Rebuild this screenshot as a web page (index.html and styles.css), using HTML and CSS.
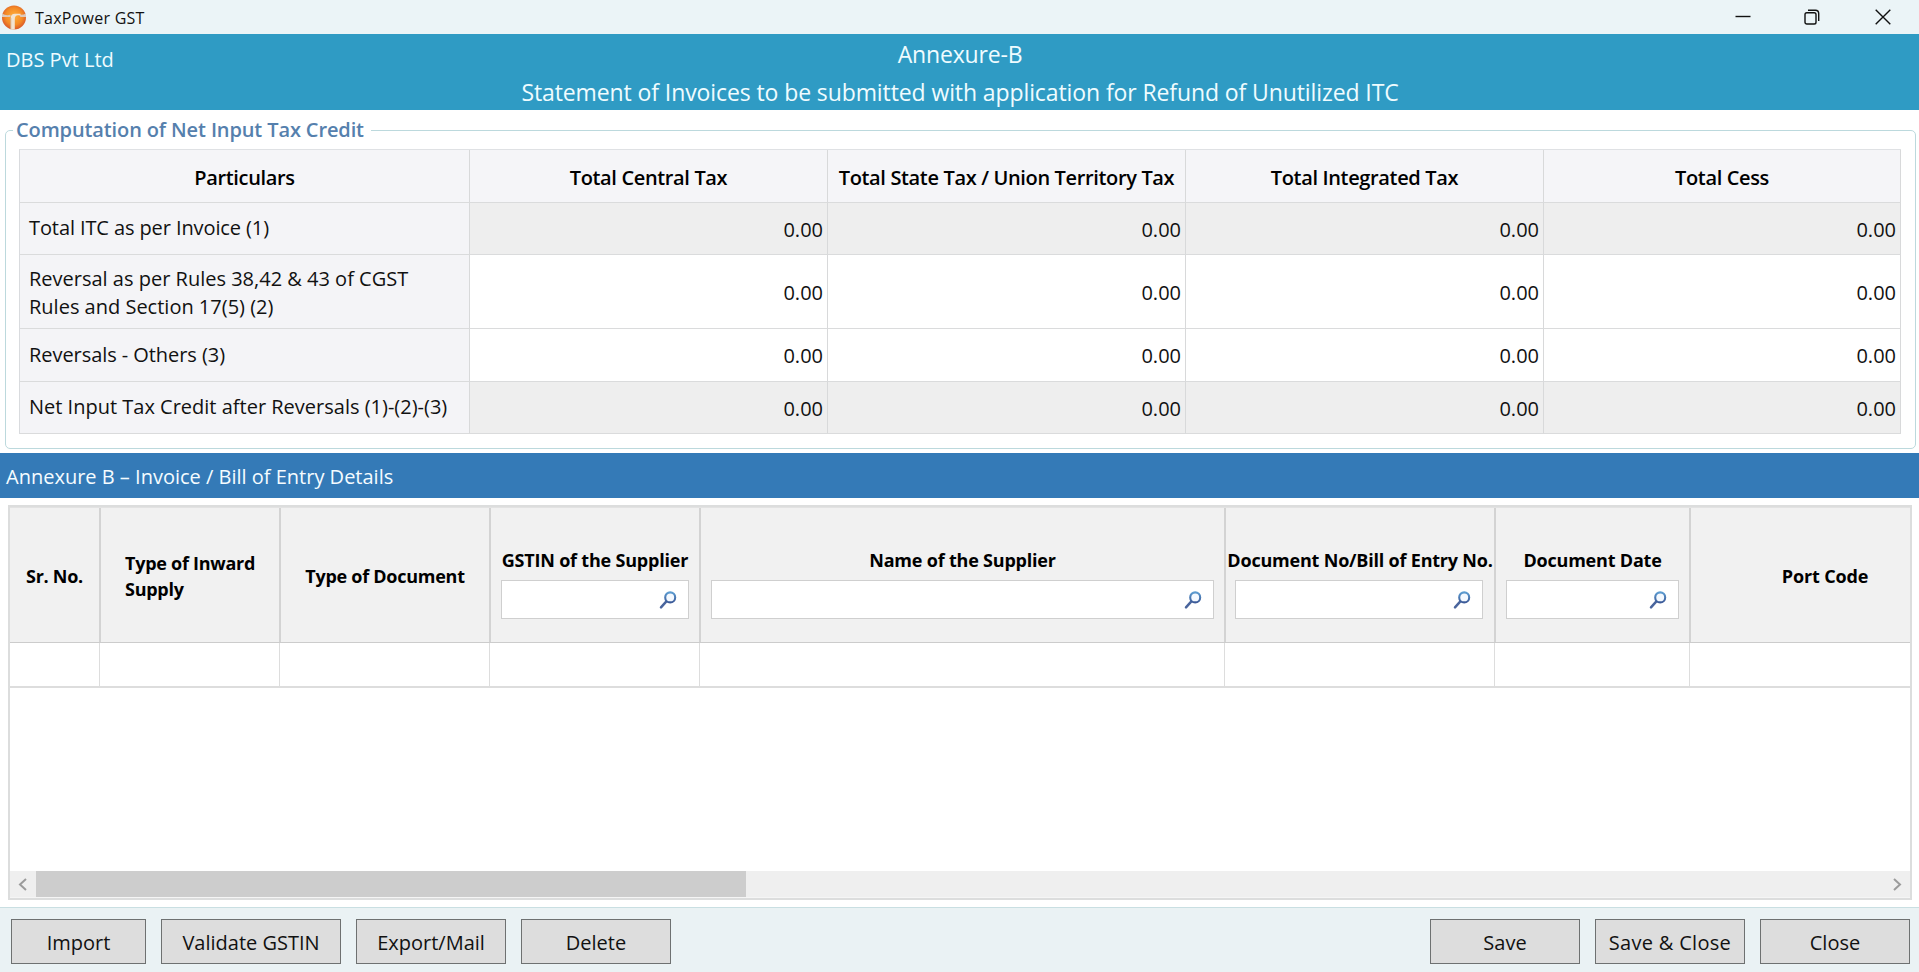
FILE: index.html
```
<!DOCTYPE html>
<html lang="en">
<head>
<meta charset="utf-8">
<title>TaxPower GST</title>
<link rel="stylesheet" href="styles.css">
</head>
<body>
<svg class="defs" width="0" height="0">
  <defs>
    <linearGradient id="lens" x1="0" y1="0" x2="0" y2="1"><stop offset="0" stop-color="#5b9bd0"/><stop offset="1" stop-color="#3c5a98"/></linearGradient>
    <radialGradient id="orb" cx=".5" cy=".45" r=".55"><stop offset="0" stop-color="#ffb03c"/><stop offset=".65" stop-color="#f48a26"/><stop offset="1" stop-color="#d9582a"/></radialGradient>
    <symbol id="search" viewBox="0 0 20 20"><path d="M8.600 11.200 3 17.300" stroke="#4a659d" stroke-width="2.500" stroke-linecap="round"/><circle cx="12.200" cy="7.400" r="5" fill="#f4f9ff" stroke="url(#lens)" stroke-width="2.100"/></symbol>
  </defs>
</svg>
<div class="window">
  <header class="titlebar">
    <svg class="logo" width="24" height="26" viewBox="0 0 24 26"><circle cx="12" cy="12.500" r="12" fill="url(#orb)"/><path d="M0 8.500q4 2.500 8.500 1.200V12H0zM17 9.500q4 .8 7-1V12h-5.500z" fill="#dcc9bb"/><path d="M8.800 24.500V12.800q0-4 4.200-4h5.500v1.400H16q-3.200.2-3.200 4v10.300z" fill="#f1e3d2"/><path d="M8.800 24.500V13" fill="none" stroke="#cfae92" stroke-width=".8"/></svg>
    <span class="app-name">TaxPower GST</span>
    <div class="controls">
      <svg width="16" height="16" viewBox="0 0 16 16"><path d="M.5 7.500h15"/></svg>
      <svg width="16" height="16" viewBox="0 0 16 16"><rect x="1" y="3.800" width="11" height="11.200" rx="1.800"/><path d="M4 1.300h7.500a3.200 3.200 0 0 1 3.200 3.200v7.500"/></svg>
      <svg width="16" height="16" viewBox="0 0 16 16"><path d="m.7.7 14.600 14.600M15.300.7.7 15.300"/></svg>
    </div>
  </header>
  <section class="banner">
    <div class="company">DBS Pvt Ltd</div>
    <div class="heading">
      <div class="h-top">Annexure-B</div>
      <div class="h-sub">Statement of Invoices to be submitted with application for Refund of Unutilized ITC</div>
    </div>
  </section>
  <fieldset class="credit">
    <legend>Computation of Net Input Tax Credit</legend>
    <div class="summary">
      <div class="th">Particulars</div><div class="th">Total Central Tax</div><div class="th">Total State Tax / Union Territory Tax</div><div class="th">Total Integrated Tax</div><div class="th">Total Cess</div>
      <div class="label l1">Total ITC as per Invoice (1)</div><div class="val ro">0.00</div><div class="val ro">0.00</div><div class="val ro">0.00</div><div class="val ro">0.00</div>
      <div class="label l2">Reversal as per Rules 38,42 &amp; 43 of CGST<br>Rules and Section 17(5) (2)</div><div class="val">0.00</div><div class="val">0.00</div><div class="val">0.00</div><div class="val">0.00</div>
      <div class="label l3">Reversals - Others (3)</div><div class="val">0.00</div><div class="val">0.00</div><div class="val">0.00</div><div class="val">0.00</div>
      <div class="label">Net Input Tax Credit after Reversals (1)-(2)-(3)</div><div class="val ro">0.00</div><div class="val ro">0.00</div><div class="val ro">0.00</div><div class="val ro">0.00</div>
    </div>
  </fieldset>
  <h2 class="section">Annexure B – Invoice / Bill of Entry Details</h2>
  <div class="grid">
    <div class="cols heads">
      <div class="gh">Sr. No.</div>
      <div class="gh two">Type of Inward<br>Supply</div>
      <div class="gh">Type of Document</div>
      <div class="gh filter"><span>GSTIN of the Supplier</span><div class="box"><svg width="20" height="20"><use href="#search"/></svg></div></div>
      <div class="gh filter"><span>Name of the Supplier</span><div class="box"><svg width="20" height="20"><use href="#search"/></svg></div></div>
      <div class="gh filter docno"><span>Document No/Bill of Entry No.</span><div class="box"><svg width="20" height="20"><use href="#search"/></svg></div></div>
      <div class="gh filter"><span>Document Date</span><div class="box"><svg width="20" height="20"><use href="#search"/></svg></div></div>
      <div class="gh port">Port Code</div>
    </div>
    <div class="cols row"><i></i><i></i><i></i><i></i><i></i><i></i><i></i><i></i></div>
    <div class="blank"></div>
    <div class="scroll">
      <svg width="26" height="26" viewBox="0 0 26 26"><path d="m16 8-6 5.500 6 5.500"/></svg>
      <div class="thumb"></div>
      <svg class="next" width="26" height="26" viewBox="0 0 26 26"><path d="m10 8 6 5.500-6 5.500"/></svg>
    </div>
  </div>
  <footer class="actions">
    <button class="w135">Import</button><button class="w180">Validate GSTIN</button><button>Export/Mail</button><button>Delete</button>
    <div class="right"><button>Save</button><button class="wide">Save &amp; Close</button><button>Close</button></div>
  </footer>
</div>
</body>
</html>
```
FILE: styles.css
```
* { box-sizing: border-box; }
body { margin: 0; background: #fff; color: #111; font: 20px/28px "Open Sans", "Noto Sans", sans-serif; }
.defs { position: absolute; }
.window { width: 1919px; height: 972px; display: flex; flex-direction: column; overflow: hidden; }

.titlebar { height: 34px; flex: none; display: flex; align-items: center; padding-left: 2px; background: #ebf4f7; }
.logo { margin-top: 1px; }
.app-name { font-size: 16px; letter-spacing: .25px; margin-left: 9px; padding-top: 1px; }
.controls { margin-left: auto; display: flex; padding: 0 28px 1px 0; }
.controls svg { fill: none; stroke: #111; stroke-width: 1.4; margin-left: 55px; }
.controls svg:nth-child(2) { margin-left: 53px; }

.banner { height: 76px; flex: none; display: grid; grid-template-columns: 1fr; background: #2f9bc4; color: #effcff; }
.banner > * { grid-area: 1 / 1; }
.company { padding: 12px 0 0 6px; }
.heading { padding: 1px 0 0 1px; text-align: center; font-size: 23px; line-height: 38px; height: 76px; }
.h-top { letter-spacing: -.17px; }
.h-sub { letter-spacing: -.1px; }

.credit { height: 333px; flex: none; margin: 6px 3px 0 5px; padding: 5px 13px 0; border: 1px solid #bcd9dd; border-radius: 5px; }
.credit legend { height: 28px; margin-left: -6px; padding: 0 7px 0 3px; color: #5580ad; font-weight: 600; letter-spacing: -.12px; }
.summary { display: grid; grid-template-columns: 450px 358px 358px 358px 357px; grid-template-rows: 53px 52px 74px 53px 52px; width: 1882px; border-left: 1px solid #d9dbde; border-top: 1px solid #dfe1e4; }
.summary > div { display: flex; align-items: center; border-right: 1px solid #d8d9da; border-bottom: 1px solid #dadbdc; }
.summary .th { justify-content: center; padding-top: 3px; background: #f5f5f8; color: #000; font-weight: 600; letter-spacing: -.35px; }
.summary .label { padding: 0 0 1px 9px; background: #f4f4f7; }
.summary .label.l2 { padding-top: 3px; }
.summary .val { justify-content: flex-end; padding: 2px 4px 0 0; background: #fff; }
.summary .ro { background: #eee; }
.summary .l1 { letter-spacing: -.1px; }
.summary .l3 { letter-spacing: -.06px; }

.section { height: 45px; flex: none; margin: 4px 0 0; padding: 10px 0 0 6px; background: #347ab7; color: #f5fcff; font-size: 20px; font-weight: 400; }

.grid { height: 395px; flex: none; margin: 7px 7px 0 8px; border: 2px solid #dcdddd; display: flex; flex-direction: column; }
.cols { display: grid; grid-template-columns: 91px 180px 210px 210px 525px 270px 195px 1fr; }
.heads { height: 136px; background: #f1f1f1; border-top: 1px solid #e2e2e2; border-bottom: 1px solid #ccc; }
.gh { display: flex; align-items: center; justify-content: center; padding-top: 2px; border-right: 2px solid #d3d3d3; color: #000; font-size: 18px; line-height: 26px; font-weight: 700; letter-spacing: -.26px; white-space: nowrap; }
.two { justify-content: flex-start; padding: 1px 0 0 24px; }
.filter { flex-direction: column; justify-content: flex-start; align-items: center; padding: 39px 10px 0; letter-spacing: -.2px; }
.docno { padding-left: 9px; padding-right: 11px; }
.docno span { margin-left: 2px; }
.box { width: 100%; height: 39px; margin-top: 7px; padding-right: 10px; display: flex; align-items: center; justify-content: flex-end; background: #fff; border: 1px solid #cfcfcf; }
.port { border-right: 0; padding-left: 49px; letter-spacing: -.14px; }
.row { height: 45px; border-bottom: 2px solid #ddd; }
.row i { border-right: 1px solid #ddd; margin-right: 1px; }
.row i:last-child { border: 0; }
.blank { flex: 1; }
.scroll { height: 27px; display: flex; background: #efefef; border-bottom: 1px solid #f5f5f5; }
.scroll svg { flex: none; fill: none; stroke: #9b9b9b; stroke-width: 2; }
.scroll .next { margin-left: auto; }
.thumb { width: 710px; background: #cdcdcd; }

.actions { flex: 1; margin-top: 7px; padding: 11px 9px 0 11px; display: flex; align-items: flex-start; gap: 15px; background: #eaf2f4; border-top: 1px solid #c9dfe2; }
.actions button { width: 150px; height: 45px; padding: 3px 0 0; border: 1px solid #6e7171; background: #ddd; color: #111; font: 20px/28px "Open Sans", "Noto Sans", sans-serif; }
.actions .w135 { width: 135px; }
.actions .w180 { width: 180px; }
.actions .wide { letter-spacing: .3px; }
.right { margin-left: auto; display: flex; gap: 15px; }
```
